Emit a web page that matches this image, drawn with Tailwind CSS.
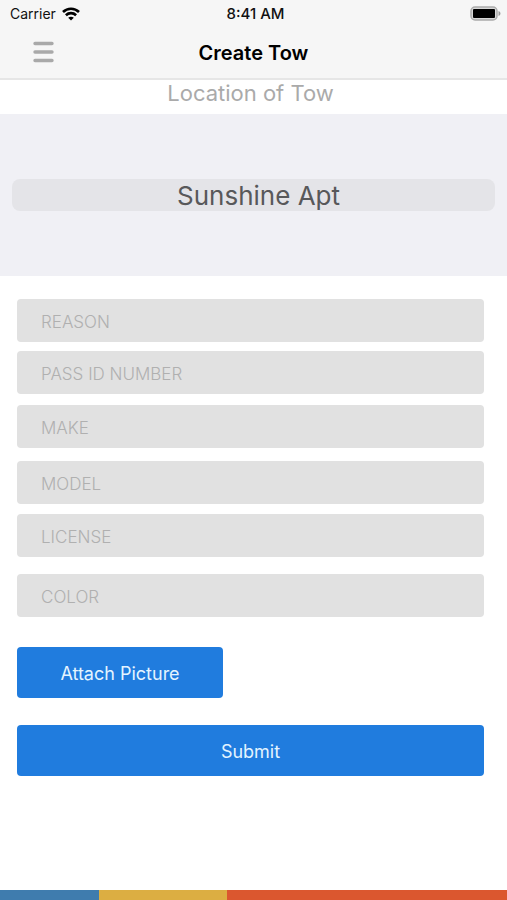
<!DOCTYPE html>
<html lang="en">
<head>
<meta charset="utf-8">
<meta name="viewport" content="width=device-width, initial-scale=1">
<title>Create Tow</title>
<script src="https://cdn.jsdelivr.net/npm/@tailwindcss/browser@4"></script>
</head>
<body class="flex min-h-screen flex-col bg-white font-['Inter',sans-serif]">
  <header class="border-b-2 border-[#e6e6e6] bg-[#f6f6f6]">
    <div class="grid h-7 grid-cols-3 items-center pr-1.5 pl-2.5 text-sm text-[#111]">
      <div class="flex items-center gap-1.5">
        <span>Carrier</span>
        <svg class="h-3.5 w-[18px]" viewBox="0 0 18 14" fill="none" stroke="#000" stroke-width="2.6" aria-hidden="true">
          <path d="M1 5C5.500.6 12.500.6 17 5M3.900 8.200c2.900-2.800 7.300-2.800 10.200 0"/>
          <path d="M9 13.600 6.200 10.800c1.600-1.500 4-1.500 5.600 0z" fill="#000" stroke="none"/>
        </svg>
      </div>
      <time class="text-center text-[15px] font-medium">8:41 AM</time>
      <svg class="h-4 w-[31px] justify-self-end" viewBox="0 0 31 16" aria-hidden="true">
        <rect x="1" y="1" width="26" height="13" rx="4" fill="#d8d8d8" stroke="#ababab" stroke-width="1.500"/>
        <rect x="3" y="3" width="22" height="9" rx="1" fill="#000"/>
        <path d="M28.500 5c2.600 1 2.600 4 0 5z" fill="#999"/>
      </svg>
    </div>
    <div class="grid h-[50px] grid-cols-[1fr_auto_1fr] items-center px-8">
      <button type="button" aria-label="Menu" class="w-6">
        <svg class="h-6 w-6" viewBox="0 0 24 24" stroke="#a9a9a9" stroke-width="3.400" stroke-linecap="round" aria-hidden="true">
          <path d="M3 2.500h17M3 11h17M3 19.500h17"/>
        </svg>
      </button>
      <h1 class="text-xl font-semibold text-black">Create Tow</h1>
    </div>
  </header>

  <main class="flex-1">
    <form>
      <label for="location" class="block h-[34px] pr-1.5 text-center text-[22px] leading-[26px] text-[#aaa]">Location of Tow</label>
      <div class="bg-[#f0f0f5] px-3 py-[65px]">
        <select id="location" class="block h-8 w-full appearance-none rounded-lg bg-[#e4e4e8] pt-0.5 pl-2.5 text-center text-[26px] leading-[30px] text-[#58585a]">
          <option>Sunshine Apt</option>
        </select>
      </div>
      <div class="flex flex-col pt-[23px] pr-[23px] pl-[17px]">
        <input type="text" aria-label="Reason" placeholder="REASON" class="h-[43px] rounded-sm bg-[#e1e1e1] px-6 pt-0.5 text-[17px] font-light text-[#555] placeholder:text-[#b0b0b0]">
        <input type="text" aria-label="Pass ID number" placeholder="PASS ID NUMBER" class="mt-[9px] h-[43px] rounded-sm bg-[#e1e1e1] px-6 pt-0.5 text-[17px] font-light text-[#555] placeholder:text-[#b0b0b0]">
        <input type="text" aria-label="Make" placeholder="MAKE" class="mt-[11px] h-[43px] rounded-sm bg-[#e1e1e1] px-6 pt-0.5 text-[17px] font-light text-[#555] placeholder:text-[#b0b0b0]">
        <input type="text" aria-label="Model" placeholder="MODEL" class="mt-[13px] h-[43px] rounded-sm bg-[#e1e1e1] px-6 pt-0.5 text-[17px] font-light text-[#555] placeholder:text-[#b0b0b0]">
        <input type="text" aria-label="License" placeholder="LICENSE" class="mt-[10px] h-[43px] rounded-sm bg-[#e1e1e1] px-6 pt-0.5 text-[17px] font-light text-[#555] placeholder:text-[#b0b0b0]">
        <input type="text" aria-label="Color" placeholder="COLOR" class="mt-[17px] h-[43px] rounded-sm bg-[#e1e1e1] px-6 pt-0.5 text-[17px] font-light text-[#555] placeholder:text-[#b0b0b0]">
        <button type="button" class="mt-[30px] h-[51px] w-[206px] rounded-sm bg-[#207cde] pt-0.5 text-lg text-[#e4f4ff]">Attach Picture</button>
        <button type="submit" class="mt-[27px] h-[51px] rounded-sm bg-[#207cde] pt-0.5 text-lg text-[#e4f4ff]">Submit</button>
      </div>
    </form>
  </main>

  <footer class="flex h-2.5" aria-hidden="true">
    <div class="w-[99px] bg-[#3f7cae]"></div>
    <div class="w-32 bg-[#dcae42]"></div>
    <div class="flex-1 bg-[#db572f]"></div>
  </footer>
</body>
</html>
